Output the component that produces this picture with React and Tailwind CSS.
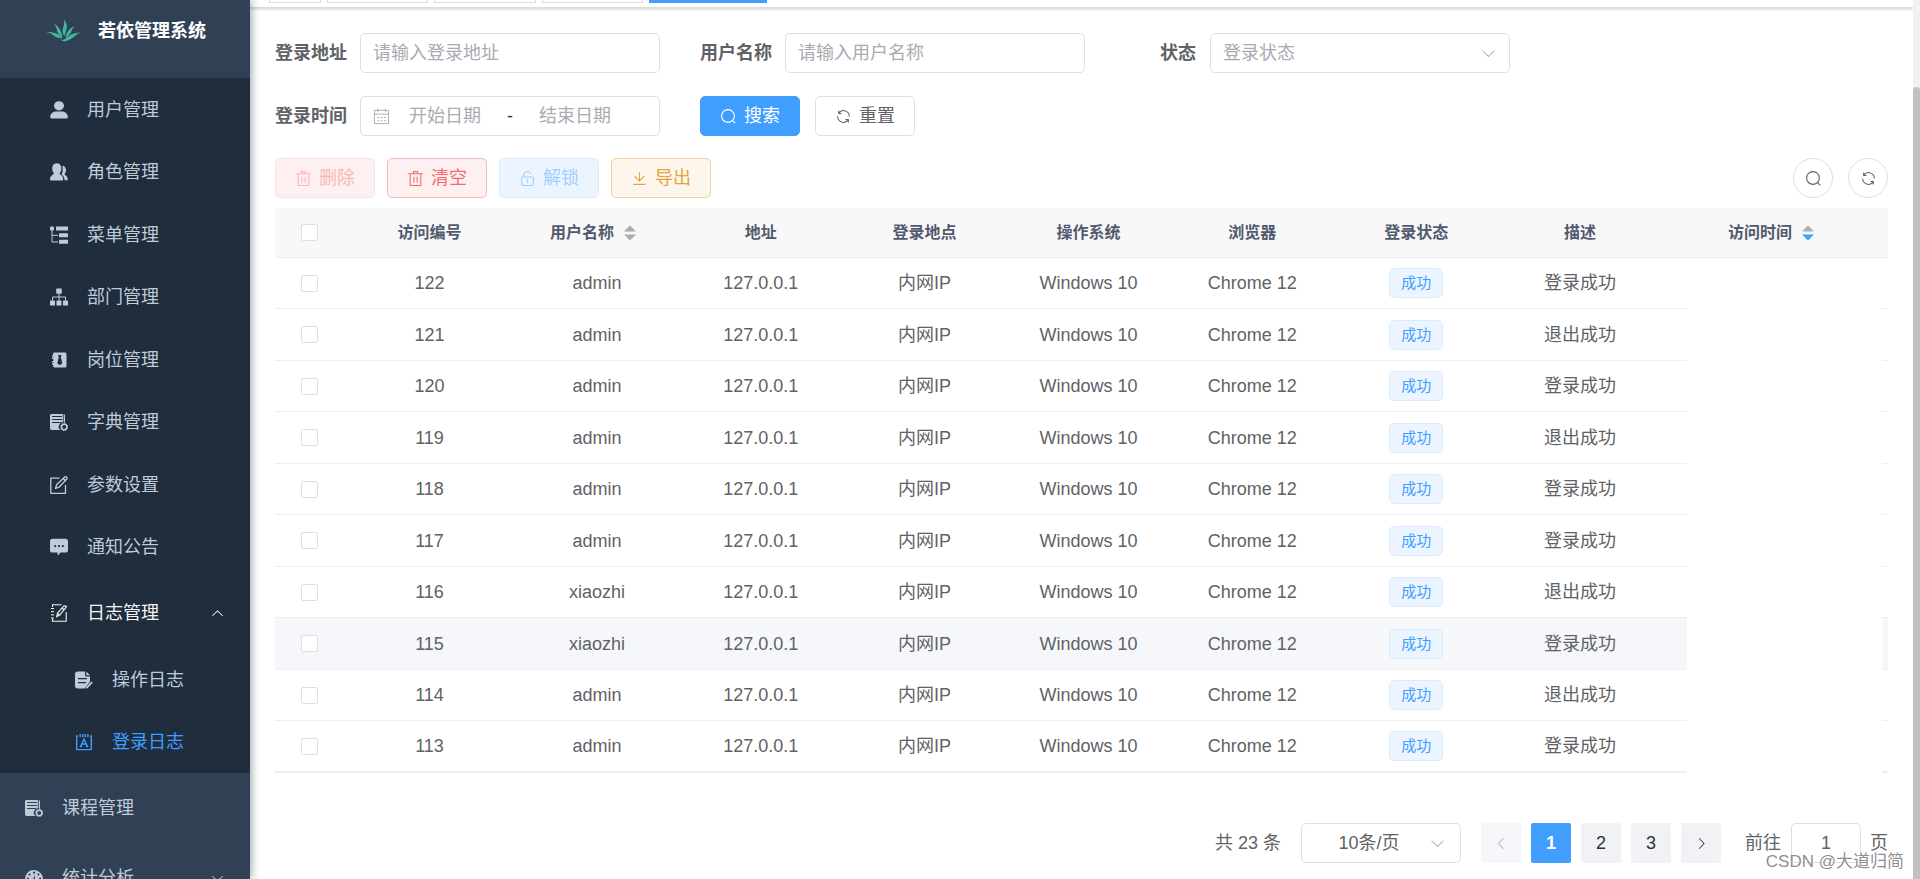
import clsx from 'clsx';

const FONT = "font-['Liberation_Sans','Noto_Sans_CJK_SC',sans-serif]";

const paths = {
    search: 'm795.904 750.72 124.992 124.928a32 32 0 0 1-45.248 45.248L750.656 795.904a416 416 0 1 1 45.248-45.248zM480 832a352 352 0 1 0 0-704 352 352 0 0 0 0 704z',
    refresh: 'M771.776 794.88A384 384 0 0 1 128 512h64a320 320 0 0 0 555.712 216.448H654.72a32 32 0 1 1 0-64h149.056a32 32 0 0 1 32 32v148.928a32 32 0 1 1-64 0v-50.56zM276.288 295.616h92.992a32 32 0 0 1 0 64H220.16a32 32 0 0 1-32-32V178.56a32 32 0 0 1 64 0v50.56A384 384 0 0 1 896.128 512h-64a320 320 0 0 0-555.776-216.384z',
    trash: 'M160 256H96a32 32 0 0 1 0-64h256V95.936a32 32 0 0 1 32-32h256a32 32 0 0 1 32 32V192h256a32 32 0 1 1 0 64h-64v672a32 32 0 0 1-32 32H192a32 32 0 0 1-32-32V256zm448-64v-64H416v64h192zM224 896h576V256H224v640zm192-128a32 32 0 0 1-32-32V416a32 32 0 0 1 64 0v320a32 32 0 0 1-32 32zm192 0a32 32 0 0 1-32-32V416a32 32 0 0 1 64 0v320a32 32 0 0 1-32 32z',
    unlock: 'M224 448a32 32 0 0 0-32 32v384a32 32 0 0 0 32 32h576a32 32 0 0 0 32-32V480a32 32 0 0 0-32-32H224zm0-64h576a96 96 0 0 1 96 96v384a96 96 0 0 1-96 96H224a96 96 0 0 1-96-96V480a96 96 0 0 1 96-96zM512 544a32 32 0 0 1 32 32v192a32 32 0 1 1-64 0V576a32 32 0 0 1 32-32zm178.304-295.296A192.064 192.064 0 0 0 320 320v64h352l96 38.4V448H256V320a256 256 0 0 1 493.76-95.104l-59.456 23.808z',
    download: 'M160 832h704a32 32 0 1 1 0 64H160a32 32 0 1 1 0-64zm384-253.696 236.288-236.352 45.248 45.248L508.8 704 192 387.2l45.248-45.248L480 584.704V128h64v450.304z',
    down: 'M831.872 340.864 512 652.672 192.128 340.864a30.592 30.592 0 0 0-42.752 0 29.12 29.12 0 0 0 0 41.6L489.664 714.24a32 32 0 0 0 44.672 0l340.288-331.712a29.12 29.12 0 0 0 0-41.728 30.592 30.592 0 0 0-42.752 0z',
    left: 'M609.408 149.376 277.76 489.6a32 32 0 0 0 0 44.672l331.648 340.352a29.12 29.12 0 0 0 41.728 0 30.592 30.592 0 0 0 0-42.752L339.264 511.936l311.872-319.872a30.592 30.592 0 0 0 0-42.688 29.12 29.12 0 0 0-41.728 0z',
    right: 'M340.864 149.312a30.592 30.592 0 0 0 0 42.752L652.736 512 340.864 831.872a30.592 30.592 0 0 0 0 42.752 29.12 29.12 0 0 0 41.728 0L714.24 534.336a32 32 0 0 0 0-44.672L382.592 149.376a29.12 29.12 0 0 0-41.728 0z',
};

const Icon = ({ name, className = 'size-[17px]' }) => (
    <svg viewBox="0 0 1024 1024" fill="currentColor" className={clsx('shrink-0', className)} aria-hidden="true">
        <path d={paths[name]} />
    </svg>
);

// Sidebar glyphs, drawn on an 18x18 grid
const glyphs = {
    user: (
        <>
            <ellipse cx="9" cy="4.8" rx="5" ry="4.6" />
            <path d="M0.2 15.5C0.6 12 3.4 10.4 6 10.4h6c2.6 0 5.4 1.6 5.8 5.1 0 1.4-.4 2-1.4 2H1.600C.6 17.500.2 16.900.2 15.500z" />
        </>
    ),
    peoples: (
        <>
            <path d="M6.800.3c2.600 0 4.600 2 4.600 4.900 0 2.200-.7 4-1.900 5.100.3 1.600 3.700 2.300 3.700 5.500 0 1.100-.3 1.700-.9 1.700H.9c-.7 0-.9-.6-.9-1.500 0-3.200 3.600-4.200 4-5.700C2.800 9.100 2.200 7.300 2.200 5.200c0-2.900 2-4.900 4.600-4.900z" />
            <path d="M12.300 2.700c2.200 0 3.700 1.800 3.700 4.200 0 1.800-.6 3.200-1.500 4 .4 1.200 3.300 2.400 3.300 5.100 0 .8-.3 1.300-.9 1.300h-2.300c-.1-3.200-1.600-4.900-3.100-5.900 1.200-1.700 1.700-5.500.8-8.700z" />
        </>
    ),
    tree: (
        <>
            <rect x="0" y="0.500" width="4" height="4" rx="1" />
            <rect x="6" y="0.500" width="12" height="4" rx="0.500" />
            <rect x="9" y="7.200" width="9" height="4" rx="0.500" />
            <rect x="9" y="13.800" width="9" height="4" rx="0.500" />
            <path d="M2 4v12h6M2 9.300h6" fill="none" stroke="currentColor" strokeWidth="1" />
        </>
    ),
    org: (
        <>
            <rect x="6.200" y="0.500" width="5.600" height="5.200" rx="0.600" />
            <rect x="0" y="12.500" width="5" height="5" rx="0.600" />
            <rect x="6.500" y="12.500" width="5" height="5" rx="0.600" />
            <rect x="13" y="12.500" width="5" height="5" rx="0.600" />
            <path d="M9 5.500v7M2.500 12.500V9h13v3.500" fill="none" stroke="currentColor" strokeWidth="1" />
        </>
    ),
    post: (
        <path
            fillRule="evenodd"
            d="M4.500 1.500h10.300c1 0 1.700.6 1.700 1.600v11.800c0 1-.7 1.600-1.700 1.600H4.500c-.9 0-1.400-.6-1.400-1.400v-1.600H2v-1.400h1.400v-.8H2v-1.400h1.400V7.900H2V6.500h1.400v-.8H2V4.300h1.100V2.900c0-.8.5-1.400 1.400-1.400zM8 4l.8 1.900-1.500 6.300 2.500 2 2.500-2-1.500-6.300L11.600 4z"
        />
    ),
    dict: (
        <>
            <path fillRule="evenodd" d="M1.500 1h12c.8 0 1.500.6 1.500 1.500v7.600a4 4 0 0 0-4.300 6.900H2c-1.100 0-2-.8-2-1.800V2.500C0 1.600.7 1 1.500 1zM2 3v1.100h10V3zm0 3v1.100h10V6zm0 3v1.100h9V9z" />
            <path d="M13.300 1v9" fill="none" stroke="#1f2d3d" strokeWidth="0.800" />
            <circle cx="14.200" cy="14" r="2.700" fill="none" stroke="currentColor" strokeWidth="1.500" />
            <circle cx="14.200" cy="14" r="3.500" fill="none" stroke="currentColor" strokeWidth="1" strokeDasharray="1.400 1.350" />
        </>
    ),
    edit: (
        <g fill="none" stroke="currentColor" strokeWidth="1.300" strokeLinejoin="round" strokeLinecap="round">
            <path d="M9 2.200H.8v15.100h14.700V9.500" />
            <path d="M5.500 12.500l1.100-3.700L14.700 1c.5-.5 1.300-.4 1.900.2s.7 1.300.2 1.800L9 11.200l-3.500 1.300zM13.200 2.500l2.200 2.200" />
        </g>
    ),
    message: (
        <path
            fillRule="evenodd"
            d="M2.500.8h13C17 .8 18 1.800 18 3.200v9c0 1.400-1 2.400-2.500 2.400h-5L8 17.600l-.7-3H2.500C1 14.600 0 13.600 0 12.200v-9C0 1.800 1 .8 2.500.8zM5.200 7a1.100 1.100 0 1 0 0 2.200 1.100 1.100 0 0 0 0-2.200zM9 7a1.100 1.100 0 1 0 0 2.200A1.100 1.100 0 0 0 9 7zm3.800 0a1.100 1.100 0 1 0 0 2.200 1.100 1.100 0 0 0 0-2.200z"
        />
    ),
    log: (
        <g fill="none" stroke="currentColor" strokeWidth="1.100">
            <path d="M2.500 3V.8h9M2.500 14.500v2.700h13.700V8M16.200 3.500V1.500" />
            <path d="M1 4.500h3M1 7.700h3M1 10.900h3M1 14h3" strokeWidth="1" />
            <path d="M6.700 12.800l.7-3.500 6-7c.6-.6 1.300-.6 1.900-.1s.7 1.200.2 1.900l-5.800 7-3 1.700zM12 4l2.200 1.900M7.400 9.300l2.300 1.900" />
        </g>
    ),
    form: (
        <>
            <path fillRule="evenodd" d="M2.500.5H10v3.600c0 .8.6 1.400 1.400 1.400H15v5.300l-5.300 6.700H2.500C1.100 17.500 0 16.500 0 15V3C0 1.500 1.100.5 2.500.5zM3 7v1.300h9V7zm0 4v1.300h8V11z" />
            <path d="M11.300.5L15 4.300h-3.700z" />
            <path d="M16.600 10.500l1.200 1.200-5 5.300-2 .8.600-2z" />
        </>
    ),
    logininfor: (
        <g fill="none" stroke="currentColor" strokeWidth="1.400">
            <path d="M3 3H1.700v13.600h14.600V3H15M5.200 1v3.200M7.800 1v3.200M10.300 1v3.200M12.900 1v3.200" />
            <path d="M5.500 13.500L9 6.200l3.500 7.300M6.700 11h4.600M4.800 13.500H7M11 13.500h2.200" />
        </g>
    ),
    chart: (
        <path
            fillRule="evenodd"
            d="M9 1a9 9 0 0 1 9 9c0 2.200-.8 4.200-2.200 5.800H2.200A9 9 0 0 1 9 1zM9 2.600a1.100 1.100 0 1 0 0 2.200 1.100 1.100 0 0 0 0-2.200zM4.600 4.400a1.100 1.100 0 1 0 0 2.200 1.100 1.100 0 0 0 0-2.200zm8.800 0a1.100 1.100 0 1 0 0 2.200 1.100 1.100 0 0 0 0-2.200zM2.900 8.600a1.100 1.100 0 1 0 0 2.200 1.100 1.100 0 0 0 0-2.200zm12.200 0a1.100 1.100 0 1 0 0 2.200 1.100 1.100 0 0 0 0-2.200zM9.500 6l-1.700 5.700a1.700 1.700 0 1 0 2.400.2z"
        />
    ),
};

const Glyph = ({ name }) => (
    <svg viewBox="0 0 18 18" fill="currentColor" className="size-[18px] shrink-0" aria-hidden="true">
        {glyphs[name]}
    </svg>
);

const Logo = () => (
    <svg viewBox="0 0 36 24" fill="#41b899" className="w-9 h-6" aria-hidden="true">
        <path d="M17.500.3c3.600 3.200 4.300 7.800 2.200 12.600-.7 1.700-1.200 3-1.100 4.600-2.300-3.200-2.700-6-1.200-9.600 1.100-2.700 1.200-5 .1-7.600z" />
        <path d="M7.300 4c4.700 2.400 7.900 7.300 9.300 14.300C12 15.700 11.200 12.600 10.600 9.500 10 7.300 9 5.600 7.300 4z" />
        <path d="M29 7c-1.500 1-2.400 2.300-3.200 4.300-1.200 3.200-2.800 5.200-6.300 7.300C20.700 12.800 24 8.500 29 7z" />
        <path d="M.2 13.200c6.800-.6 12.700 1.700 16.400 6-4 .2-6.900-1-9.600-3.300C4.900 14.200 2.900 13.400.2 13.200z" />
        <path d="M35.800 13.600c-2.700.3-4.300 1.200-6.300 3-2.900 2.700-6.200 4.800-11 5.900-1.600-.4-3-1-4.300-2 1.600.5 3 .4 4.300.1 4-4.500 10-7.500 17.300-7z" />
    </svg>
);

const systemMenu = [
    { label: '用户管理', icon: 'user' },
    { label: '角色管理', icon: 'peoples' },
    { label: '菜单管理', icon: 'tree' },
    { label: '部门管理', icon: 'org' },
    { label: '岗位管理', icon: 'post' },
    { label: '字典管理', icon: 'dict' },
    { label: '参数设置', icon: 'edit' },
    { label: '通知公告', icon: 'message' },
];

const logMenu = [
    { label: '操作日志', icon: 'form' },
    { label: '登录日志', icon: 'logininfor', active: true },
];

const MenuLink = ({ item, className }) => (
    <a href="#" className={clsx('flex h-full items-center gap-[19px]', item.active && 'text-[#409eff]', className)}>
        <Glyph name={item.icon} />
        {item.label}
    </a>
);

const Sidebar = () => (
    <aside className="relative z-10 w-[250px] shrink-0 overflow-hidden bg-[#304156] text-lg text-[#bfcbd9] shadow-[2px_0_8px_rgba(0,21,41,0.35)]">
        <div className="flex h-[62px] items-center justify-center gap-4 pl-0.5">
            <Logo />
            <h1 className="font-bold text-white">若依管理系统</h1>
        </div>
        <nav className="pt-4">
            <div className="bg-[#1f2d3d]">
                <ul>
                    {systemMenu.map((item) => (
                        <li key={item.label} className="odd:h-[63px] even:h-[62px]">
                            <MenuLink item={item} className="pl-[50px]" />
                        </li>
                    ))}
                </ul>
                <button type="button" className="flex h-[70px] w-full items-center gap-[19px] pl-[50px] pr-[25px] text-[#f4f4f5]">
                    <Glyph name="log" />
                    <span className="flex-1 text-left">日志管理</span>
                    <Icon name="down" className="size-[15px] rotate-180" />
                </button>
                <ul>
                    {logMenu.map((item) => (
                        <li key={item.label} className="odd:h-[63px] even:h-[62px]">
                            <MenuLink item={item} className="pl-[75px]" />
                        </li>
                    ))}
                </ul>
            </div>
            <a href="#" className="flex h-[70px] items-center gap-[19px] pl-[25px]">
                <Glyph name="dict" />
                课程管理
            </a>
            <button type="button" className="flex h-[70px] w-full items-center gap-[19px] pl-[25px] pr-[25px]">
                <Glyph name="chart" />
                <span className="flex-1 text-left">统计分析</span>
                <Icon name="down" className="size-[15px]" />
            </button>
        </nav>
    </aside>
);

// Only the bottom edge of the tag strip is in view
const TagsView = () => (
    <div className="flex h-2 items-start gap-[6px] border-b border-[#d8dce5] bg-white pl-[19px] shadow-[0_1px_3px_rgba(0,0,0,0.2)]">
        <span className="h-[3px] w-[52px] border border-t-0 border-[#d8dce5]" />
        <span className="h-[3px] w-[101px] border border-t-0 border-[#d8dce5]" />
        <span className="h-[3px] w-[102px] border border-t-0 border-[#d8dce5]" />
        <span className="h-[3px] w-[101px] border border-t-0 border-[#d8dce5]" />
        <span className="h-[3px] w-[118px] bg-[#409eff]" />
    </div>
);

const fieldBox = 'h-10 w-[300px] rounded-[5px] border border-[#dcdfe6] bg-white';

const Field = ({ label, id, children }) => (
    <div className="flex items-center">
        <label htmlFor={id} className="w-[85px] whitespace-nowrap pr-[14px] text-right font-bold text-[#606266]">
            {label}
        </label>
        {children}
    </div>
);

const buttonStyles = {
    primary: 'border-[#409eff] bg-[#409eff] text-white',
    plain: 'border-[#dcdfe6] bg-white text-[#606266]',
    danger: 'border-[#fab6b6] bg-[#fef0f0] text-[#f56c6c]',
    dangerOff: 'border-[#fde2e2] bg-[#fef0f0] text-[#fab6b6]',
    blueOff: 'border-[#d9ecff] bg-[#ecf5ff] text-[#a0cfff]',
    warning: 'border-[#f3d19e] bg-[#fdf6ec] text-[#e6a23c]',
};

const Button = ({ kind, icon, disabled, children }) => (
    <button
        type="button"
        disabled={disabled}
        className={clsx('flex h-10 w-[100px] items-center justify-center gap-[7px] rounded-[5px] border', buttonStyles[kind])}
    >
        <Icon name={icon} />
        {children}
    </button>
);

const SearchForm = () => (
    <form className="flex flex-wrap gap-x-10 gap-y-[23px]">
        <Field label="登录地址" id="ipaddr">
            <input id="ipaddr" type="text" placeholder="请输入登录地址" className={clsx(fieldBox, 'px-3 placeholder:text-[#a8abb2]')} />
        </Field>
        <Field label="用户名称" id="userName">
            <input id="userName" type="text" placeholder="请输入用户名称" className={clsx(fieldBox, 'px-3 placeholder:text-[#a8abb2]')} />
        </Field>
        <Field label="状态" id="status">
            <div className="relative">
                <select id="status" className={clsx(fieldBox, 'appearance-none px-3 text-[#a8abb2]')}>
                    <option>登录状态</option>
                </select>
                <Icon name="down" className="pointer-events-none absolute right-[13px] top-3 size-[17px] text-[#a8abb2]" />
            </div>
        </Field>
        <div className="basis-full flex gap-10">
            <Field label="登录时间" id="beginTime">
                <div className={clsx(fieldBox, 'flex items-center px-3')}>
                    <svg viewBox="0 0 18 18" fill="none" stroke="#a8abb2" className="size-[17px] shrink-0" aria-hidden="true">
                        <path d="M1.500 2.500h15v14h-15zM1.500 6.500h15M5 .5v3.500M13 .5v3.500" />
                        <path d="M4.500 10h9M4.500 13.500h9" strokeWidth="1.200" strokeDasharray="2 1.500" />
                    </svg>
                    <input id="beginTime" type="text" placeholder="开始日期" className="min-w-0 flex-1 text-center placeholder:text-[#a8abb2]" />
                    <span className="w-5 text-center text-[#303133]">-</span>
                    <input type="text" aria-label="结束日期" placeholder="结束日期" className="min-w-0 flex-1 text-center placeholder:text-[#a8abb2]" />
                    <span className="w-[17px]" />
                </div>
            </Field>
            <div className="flex gap-[15px]">
                <Button kind="primary" icon="search">搜索</Button>
                <Button kind="plain" icon="refresh">重置</Button>
            </div>
        </div>
    </form>
);

const Toolbar = () => (
    <div className="mt-[22px] mb-[10px] flex gap-3">
        <Button kind="dangerOff" icon="trash" disabled>删除</Button>
        <Button kind="danger" icon="trash">清空</Button>
        <Button kind="blueOff" icon="unlock" disabled>解锁</Button>
        <Button kind="warning" icon="download">导出</Button>
        <div className="ml-auto flex gap-[15px]">
            <button type="button" aria-label="隐藏搜索" className="flex size-10 items-center justify-center rounded-full border border-[#dcdfe6] text-[#606266]">
                <Icon name="search" />
            </button>
            <button type="button" aria-label="刷新" className="flex size-10 items-center justify-center rounded-full border border-[#dcdfe6] text-[#606266]">
                <Icon name="refresh" />
            </button>
        </div>
    </div>
);

const rows = [
    { id: 122, user: 'admin', msg: '登录成功' },
    { id: 121, user: 'admin', msg: '退出成功' },
    { id: 120, user: 'admin', msg: '登录成功' },
    { id: 119, user: 'admin', msg: '退出成功' },
    { id: 118, user: 'admin', msg: '登录成功' },
    { id: 117, user: 'admin', msg: '登录成功' },
    { id: 116, user: 'xiaozhi', msg: '退出成功' },
    { id: 115, user: 'xiaozhi', msg: '登录成功', hover: true },
    { id: 114, user: 'admin', msg: '退出成功' },
    { id: 113, user: 'admin', msg: '登录成功' },
];

const SortCaret = ({ desc }) => (
    <svg viewBox="0 0 12 16" className="ml-[10px] h-4 w-3" aria-hidden="true">
        <path d="M0 6.500L6 .5l6 6z" fill="#a8abb2" />
        <path d="M0 9.500l6 6 6-6z" fill={desc ? '#409eff' : '#a8abb2'} />
    </svg>
);

const Checkbox = ({ label }) => (
    <input
        type="checkbox"
        aria-label={label}
        className="mx-auto block size-[17px] appearance-none rounded-[2px] border border-[#dcdfe6] bg-white"
    />
);

const LogTable = () => (
    <table className="w-full table-fixed border-separate border-spacing-0 text-center text-[#606266]">
        <colgroup>
            <col className="w-[69px]" />
            <col className="w-[171px]" />
            <col span="7" />
            <col className="w-[25px]" />
            <col className="w-[195px]" />
            <col className="w-[6px]" />
        </colgroup>
        <thead>
            <tr className="h-[50px] bg-[#f8f8f9] text-base text-[#515a6e] *:border-b *:border-[#ebeef5] *:font-bold">
                <th><Checkbox label="全选" /></th>
                <th>访问编号</th>
                <th>
                    <span className="flex items-center justify-center pr-2">用户名称<SortCaret /></span>
                </th>
                <th>地址</th>
                <th>登录地点</th>
                <th>操作系统</th>
                <th>浏览器</th>
                <th>登录状态</th>
                <th>描述</th>
                <th colSpan="3">
                    <span className="flex items-center justify-center pr-2">访问时间<SortCaret desc /></span>
                </th>
            </tr>
        </thead>
        <tbody>
            {rows.map((row) => (
                <tr
                    key={row.id}
                    className={clsx(
                        'odd:h-[51px] even:h-[52px] *:border-b *:border-[#ebeef5] last:*:border-b-2',
                        row.hover && '*:bg-[#f5f7fa]'
                    )}
                >
                    <td><Checkbox label={`选择 ${row.id}`} /></td>
                    <td>{row.id}</td>
                    <td>{row.user}</td>
                    <td>127.0.0.1</td>
                    <td>内网IP</td>
                    <td>Windows 10</td>
                    <td>Chrome 12</td>
                    <td>
                        <span className="mx-auto flex h-[30px] w-[54px] items-center justify-center rounded-[5px] border border-[#d9ecff] bg-[#ecf5ff] text-[15px] text-[#409eff]">
                            成功
                        </span>
                    </td>
                    <td>{row.msg}</td>
                    <td />
                    <td className="border-b-0! bg-white!" />
                    <td />
                </tr>
            ))}
        </tbody>
    </table>
);

const pageButton = 'flex size-10 items-center justify-center rounded-[2px] bg-[#f0f2f5] text-[#303133]';

const Pagination = () => (
    <div className="mt-[50px] flex items-center justify-end text-[#606266]">
        <span className="mr-5">共 23 条</span>
        <div className="relative mr-5">
            <select aria-label="每页条数" className="h-10 w-40 appearance-none rounded-[5px] border border-[#dcdfe6] bg-white pr-9 pl-3 [text-align-last:center]">
                <option>10条/页</option>
            </select>
            <Icon name="down" className="pointer-events-none absolute right-[15px] top-3 size-[17px] text-[#a8abb2]" />
        </div>
        <div className="flex gap-[10px]">
            <button type="button" aria-label="上一页" disabled className={clsx(pageButton, 'bg-[#f5f7fa]! text-[#a8abb2]!')}>
                <Icon name="left" className="size-[15px]" />
            </button>
            <button type="button" className={clsx(pageButton, 'bg-[#409eff]! font-bold text-white!')}>1</button>
            <button type="button" className={pageButton}>2</button>
            <button type="button" className={pageButton}>3</button>
            <button type="button" aria-label="下一页" className={pageButton}>
                <Icon name="right" className="size-[15px]" />
            </button>
        </div>
        <label htmlFor="jumper" className="mr-[10px] ml-6">前往</label>
        <input id="jumper" type="text" defaultValue="1" className="mr-[9px] h-10 w-[70px] rounded-[5px] border border-[#dcdfe6] bg-white text-center" />
        <span>页</span>
    </div>
);

const App = () => (
    <div className={clsx('relative flex h-screen overflow-hidden bg-white text-lg', FONT)}>
        <Sidebar />
        <div className="min-w-0 flex-1">
            <TagsView />
            <main className="pt-[25px] pr-[25px] pl-[25px]">
                <SearchForm />
                <Toolbar />
                <LogTable />
                <Pagination />
            </main>
        </div>
        {/* Scrollbar */}
        <div className="z-10 w-[7px] shrink-0 bg-[#f1f1f1] pt-[87px]">
            <div className="h-full rounded-t-full bg-[#c1c1c1]" />
        </div>
        <span className="absolute right-4 bottom-1 text-[17px] text-[#808080]/90 [text-shadow:1px_1px_0_#fff]">CSDN @大道归简</span>
    </div>
);

export default App;
